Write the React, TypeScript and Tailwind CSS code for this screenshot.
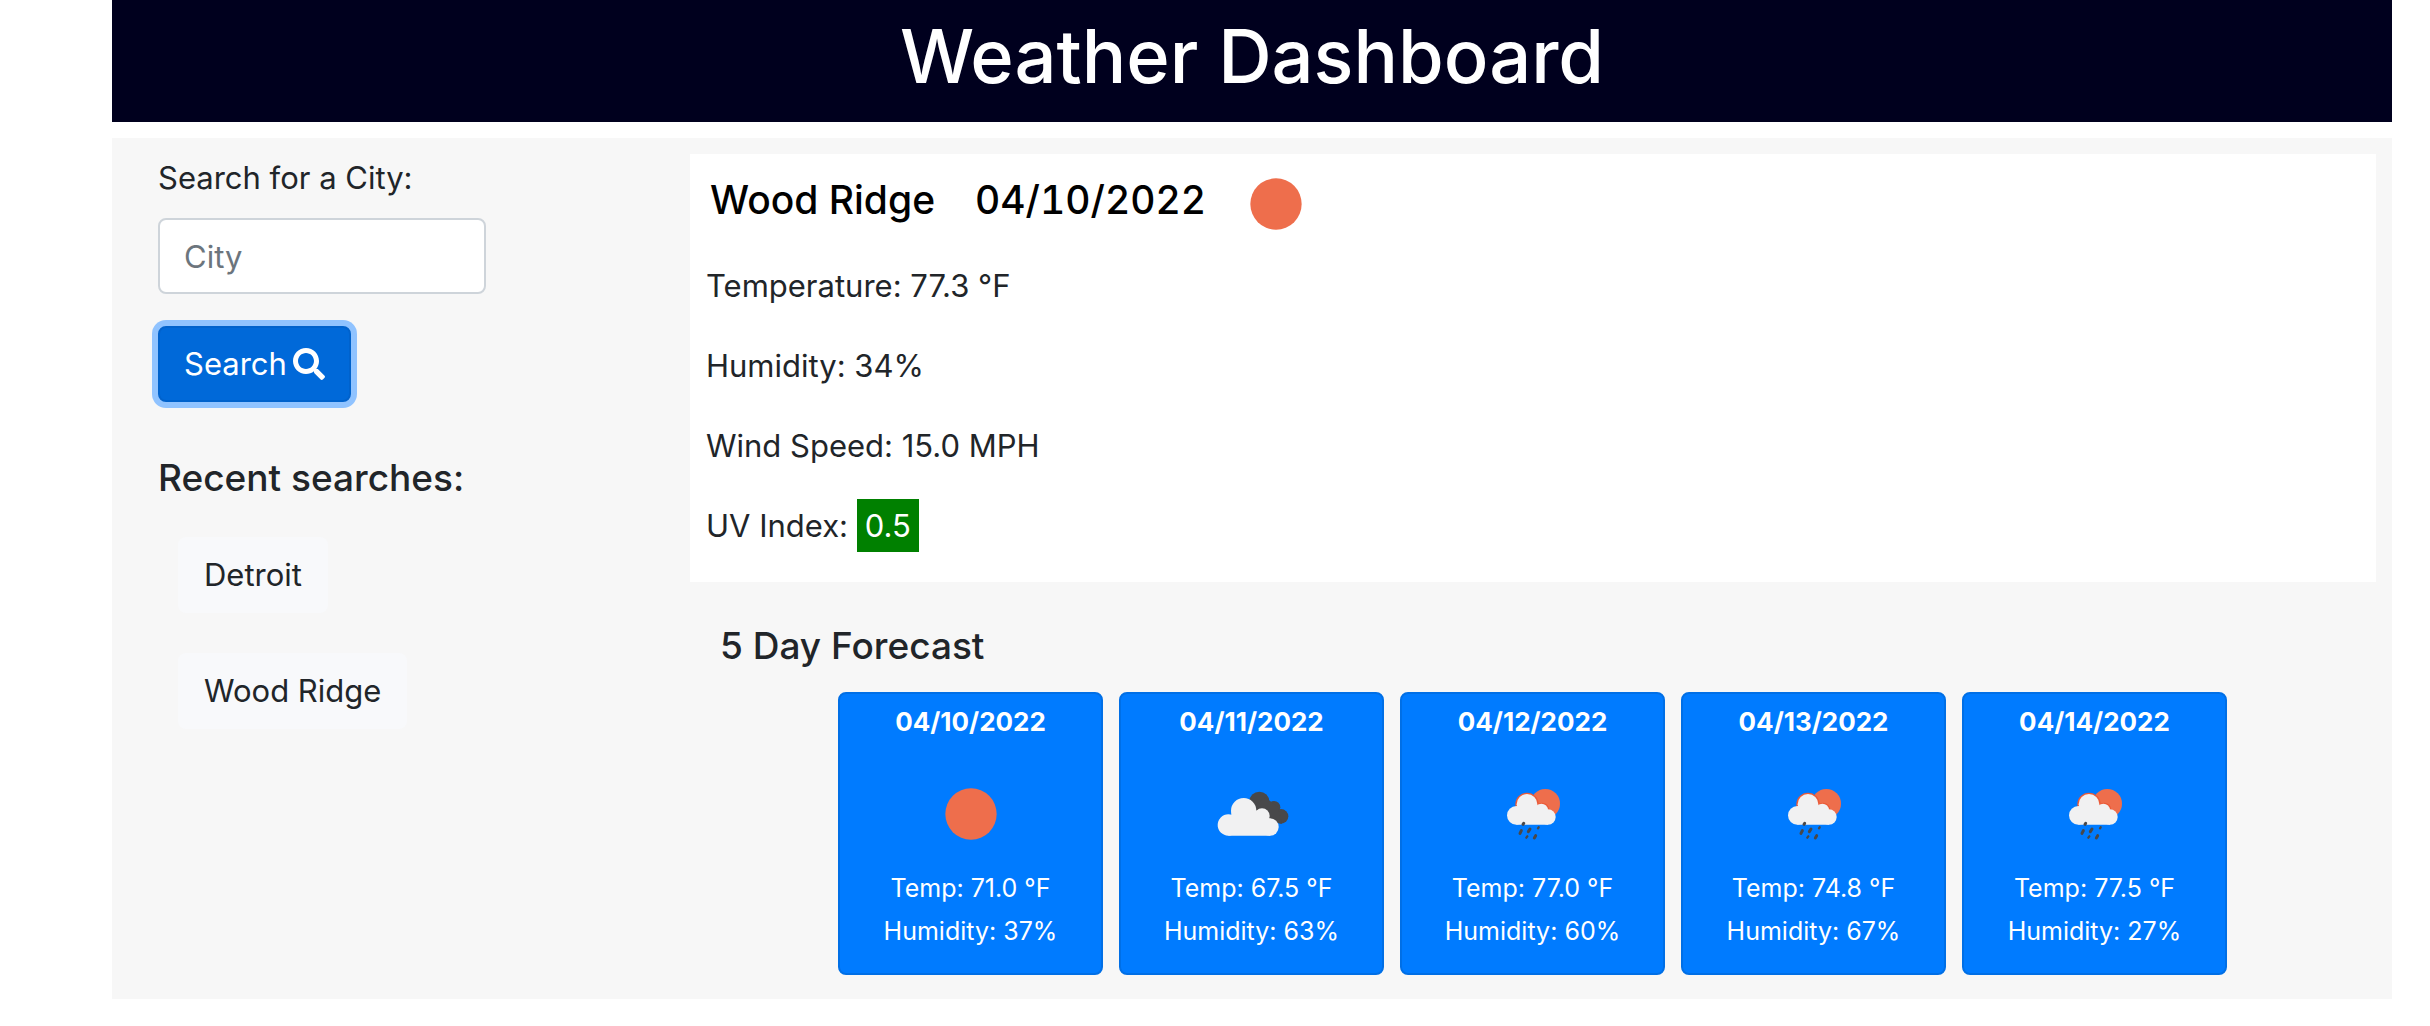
import type { ReactNode } from 'react';
import { FaSearch } from 'react-icons/fa';

type Sky = 'clear' | 'clouds' | 'rain';

interface ForecastDay {
  date: string;
  sky: Sky;
  temp: string;
  humidity: string;
}

const recentCities = ['Detroit', 'Wood Ridge'];

const forecast: ForecastDay[] = [
  { date: '04/10/2022', sky: 'clear', temp: '71.0', humidity: '37' },
  { date: '04/11/2022', sky: 'clouds', temp: '67.5', humidity: '63' },
  { date: '04/12/2022', sky: 'rain', temp: '77.0', humidity: '60' },
  { date: '04/13/2022', sky: 'rain', temp: '74.8', humidity: '67' },
  { date: '04/14/2022', sky: 'rain', temp: '77.5', humidity: '27' },
];

function SkyFrame({ label, children }: { label: string; children: ReactNode }) {
  return (
    <svg role="img" aria-label={label} viewBox="0 0 300 300" className="size-[100px] shrink-0">
      {children}
    </svg>
  );
}

function SkyIcon({ sky }: { sky: Sky }) {
  if (sky === 'clear') {
    return (
      <SkyFrame label="Clear sky">
        <circle cx="150" cy="150" r="77" fill="#ee6e4c" />
      </SkyFrame>
    );
  }
  if (sky === 'clouds') {
    return (
      <SkyFrame label="Broken clouds">
        <g fill="#48484a">
          <circle cx="172" cy="113" r="30" />
          <circle cx="216" cy="130" r="19" />
          <circle cx="237" cy="157" r="22" />
          <path d="M150 130 L190 100 L228 130 L240 179 L215 175 Z" />
        </g>
        <g fill="#f1f1f2">
          <circle cx="79" cy="183" r="32" />
          <circle cx="125" cy="140" r="38" />
          <circle cx="180" cy="156" r="23" />
          <circle cx="204" cy="189" r="26" />
          <path d="M79 215 L90 140 H180 L204 165 V215 Z" />
        </g>
      </SkyFrame>
    );
  }
  return (
    <SkyFrame label="Rain">
      <circle cx="187" cy="119" r="44" fill="#ee6e4c" />
      <g fill="#ea5a38">
        <circle cx="132" cy="121" r="35" />
        <circle cx="177" cy="138" r="22" />
      </g>
      <g fill="#f1f1f2">
        <circle cx="100" cy="154" r="28" />
        <circle cx="132" cy="121" r="31" />
        <circle cx="175" cy="139" r="20" />
        <circle cx="195" cy="159" r="23" />
        <path d="M100 182 L105 125 H175 L195 140 V182 Z" />
      </g>
      <g stroke="#48484a" strokeLinecap="round" strokeWidth="9">
        <path d="M122 178 L120 181" />
        <path d="M115 200 L111 208" />
        <path d="M141 195 L136 203" />
        <path d="M167 190 L165 193" strokeWidth="7" />
        <path d="M133 217 L130 221" strokeWidth="7" />
        <path d="M158 215 L154 222" />
      </g>
    </SkyFrame>
  );
}

function ForecastCard({ day }: { day: ForecastDay }) {
  return (
    <li className="flex max-w-[265px] flex-1 flex-col items-center rounded-lg border-2 border-[#006fe6] bg-[#007bff] px-2 pt-1.5 pb-5 text-center text-[25px] leading-[43px] text-white">
      <h4 className="text-[26px] font-bold">{day.date}</h4>
      <div className="pt-[21px] pb-[3px]">
        <SkyIcon sky={day.sky} />
      </div>
      <p>Temp: {day.temp} °F</p>
      <p>Humidity: {day.humidity}%</p>
    </li>
  );
}

export default function App() {
  return (
    <div className="mr-[38px] ml-28 font-[Inter,'Liberation_Sans',sans-serif] text-[31px] leading-[48px] text-[#212529]">
      <header className="bg-[#00001e] pt-2 pb-[18px] text-center text-white">
        <h1 className="text-[74px] leading-[96px] font-medium">Weather Dashboard</h1>
      </header>

      <div className="mt-4 flex bg-[#f7f7f7] p-4 pb-6">
        <aside className="w-[562px] shrink-0 pl-[30px]">
          <form onSubmit={(e) => e.preventDefault()}>
            <label htmlFor="city" className="mb-4 block">
              Search for a City:
            </label>
            <input
              id="city"
              type="text"
              placeholder="City"
              className="mb-8 block h-[76px] w-[328px] rounded-lg border-2 border-[#ced4da] bg-white px-6 placeholder:text-[#6c757d]"
            />
            <button
              type="submit"
              className="flex h-[76px] items-center gap-1.5 rounded-lg border-2 border-[#0062cc] bg-[#0069d9] px-6 text-white ring-6 ring-[#90c3ff]"
            >
              Search
              <FaSearch className="size-8" aria-hidden="true" />
            </button>
          </form>

          <h3 className="mt-[52px] text-[37px] font-medium">Recent searches:</h3>
          <ul className="mt-[35px] flex flex-col items-start gap-10 pl-5">
            {recentCities.map((city) => (
              <li key={city}>
                <button type="button" className="h-[76px] rounded-lg bg-[#f8f9fb] px-[26px]">
                  {city}
                </button>
              </li>
            ))}
          </ul>
        </aside>

        <main className="min-w-0 flex-1">
          <section className="bg-white px-4 pb-8">
            <div className="flex h-[108px] items-start pl-1 text-black">
              <h2 className="mt-[22px] text-[39px] font-medium">Wood Ridge</h2>
              <h2 className="mt-[22px] ml-10 text-[39px] font-medium tabular-nums">04/10/2022</h2>
              <div className="ml-5">
                <SkyIcon sky="clear" />
              </div>
            </div>
            <div className="flex flex-col gap-8">
              <p>Temperature: 77.3 °F</p>
              <p>Humidity: 34%</p>
              <p>Wind Speed: 15.0 MPH</p>
              <p>
                UV Index: <span className="bg-[green] p-2 text-white">0.5</span>
              </p>
            </div>
          </section>

          <section>
            <h3 className="mt-10 pl-[30px] text-[37px] font-medium">5 Day Forecast</h3>
            <ul className="mt-[22px] mr-px flex justify-center gap-4">
              {forecast.map((day) => (
                <ForecastCard key={day.date} day={day} />
              ))}
            </ul>
          </section>
        </main>
      </div>
    </div>
  );
}
